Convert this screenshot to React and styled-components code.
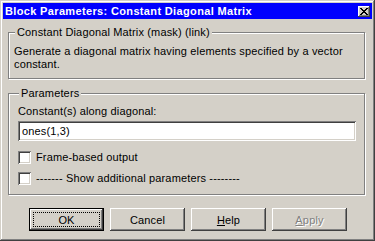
import React from 'react'
import styled, { createGlobalStyle } from 'styled-components'

const Global = createGlobalStyle`
  html, body {
    margin: 0;
    padding: 0;
    background: #d4d0c8;
  }
  body {
    font-family: "Liberation Sans", Arial, sans-serif;
    font-size: 11px;
    letter-spacing: 0.15px;
    color: #000;
  }
`

const Window = styled.div`
  box-sizing: border-box;
  width: 375px;
  height: 241px;
  padding: 3px;
  background: #d4d0c8;
  display: flex;
  flex-direction: column;
  box-shadow: inset -1px -1px #404040, inset 1px 1px #d4d0c8,
    inset -2px -2px #808080, inset 2px 2px #ffffff;
`

const TitleBar = styled.div`
  height: 16px;
  background: #0000fe;
  display: flex;
  align-items: center;
  justify-content: space-between;
  padding: 0 2px 0 2px;
`

const Title = styled.span`
  color: #fff;
  font-weight: bold;
  font-size: 11px;
  letter-spacing: 0.35px;
  line-height: 13px;
`

const CaptionButton = styled.button`
  box-sizing: border-box;
  width: 12px;
  height: 11px;
  padding: 0;
  border: 0;
  background: #d4d0c8;
  display: flex;
  align-items: center;
  justify-content: center;
  box-shadow: inset -1px -1px #404040, inset 1px 1px #ffffff,
    inset -2px -2px #808080;
`

const Body = styled.div`
  flex: 1;
  display: flex;
  flex-direction: column;
  padding: 7px 7px 0 5px;
`

const Group = styled.fieldset`
  margin: 0 0 ${(p) => p.$gap || 0}px 0;
  padding: ${(p) => p.$pad};
  border: 1px solid #808080;
  box-shadow: 1px 1px 0 #fff, inset 1px 1px 0 #fff;
  min-width: 0;
`

const Legend = styled.legend`
  padding: 0 2px;
  margin-left: 1px;
  line-height: 13px;
  background: #d4d0c8;
`

const Text = styled.div`
  line-height: 13px;
`

const Edit = styled.div`
  box-sizing: border-box;
  height: 20px;
  margin-top: 3px;
  background: #fff;
  padding: 0 4px;
  display: flex;
  align-items: center;
  box-shadow: inset 1px 1px #808080, inset -1px -1px #fff,
    inset 2px 2px #404040, inset -2px -2px #d4d0c8;
`

const CheckRow = styled.label`
  display: flex;
  align-items: center;
  height: 13px;
  margin-top: ${(p) => p.$top}px;
  gap: 5px;
  line-height: 13px;
`

const Box = styled.span`
  box-sizing: border-box;
  width: 13px;
  height: 13px;
  background: #fff;
  box-shadow: inset 1px 1px #808080, inset -1px -1px #fff,
    inset 2px 2px #404040, inset -2px -2px #d4d0c8;
`

const Buttons = styled.div`
  display: flex;
  justify-content: flex-end;
  gap: 6px;
  margin-top: 13px;
  padding-right: 18px;
`

const Button = styled.button`
  position: relative;
  box-sizing: border-box;
  width: 75px;
  height: 23px;
  padding: 0;
  font-family: inherit;
  font-size: 11px;
  letter-spacing: inherit;
  color: ${(p) => (p.disabled ? '#808080' : '#000')};
  text-shadow: ${(p) => (p.disabled ? '1px 1px 0 #fff' : 'none')};
  background: #d4d0c8;
  border: ${(p) => (p.$default ? '1px solid #000' : '0')};
  box-shadow: inset -1px -1px #404040, inset 1px 1px #ffffff,
    inset -2px -2px #808080, inset 2px 2px #d4d0c8;
  display: flex;
  align-items: center;
  justify-content: center;
`

const Focus = styled.span`
  position: absolute;
  inset: 3px;
  border: 1px dotted #000;
`

function CloseGlyph() {
  return (
    <svg width="8" height="7" viewBox="0 0 8 7" shapeRendering="crispEdges">
      <path
        d="M0 0h2v1h-2zM6 0h2v1h-2zM1 1h2v1h-2zM5 1h2v1h-2zM2 2h4v1h-4zM3 3h2v1h-2zM2 4h4v1h-4zM1 5h2v1h-2zM5 5h2v1h-2zM0 6h2v1h-2zM6 6h2v1h-2z"
        fill="#000"
      />
    </svg>
  )
}

export default function App() {
  return (
    <>
      <Global />
      <Window>
        <TitleBar>
          <Title>Block Parameters: Constant Diagonal Matrix</Title>
          <CaptionButton aria-label="Close">
            <CloseGlyph />
          </CaptionButton>
        </TitleBar>
        <Body>
          <Group $pad="6px 5px 7px 5px" $gap={8}>
            <Legend>Constant Diagonal Matrix (mask) (link)</Legend>
            <Text>
              Generate a diagonal matrix having elements specified by a vector
              <br />
              constant.
            </Text>
          </Group>
          <Group $pad="5px 8px 9px 9px">
            <Legend>Parameters</Legend>
            <Text>Constant(s) along diagonal:</Text>
            <Edit>ones(1,3)</Edit>
            <CheckRow $top={10}>
              <Box />
              Frame-based output
            </CheckRow>
            <CheckRow $top={8}>
              <Box />
              ------- Show additional parameters --------
            </CheckRow>
          </Group>
          <Buttons>
            <Button $default>
              <Focus />
              OK
            </Button>
            <Button>Cancel</Button>
            <Button>
              <span>
                <u>H</u>elp
              </span>
            </Button>
            <Button disabled>
              <span>
                <u>A</u>pply
              </span>
            </Button>
          </Buttons>
        </Body>
      </Window>
    </>
  )
}
